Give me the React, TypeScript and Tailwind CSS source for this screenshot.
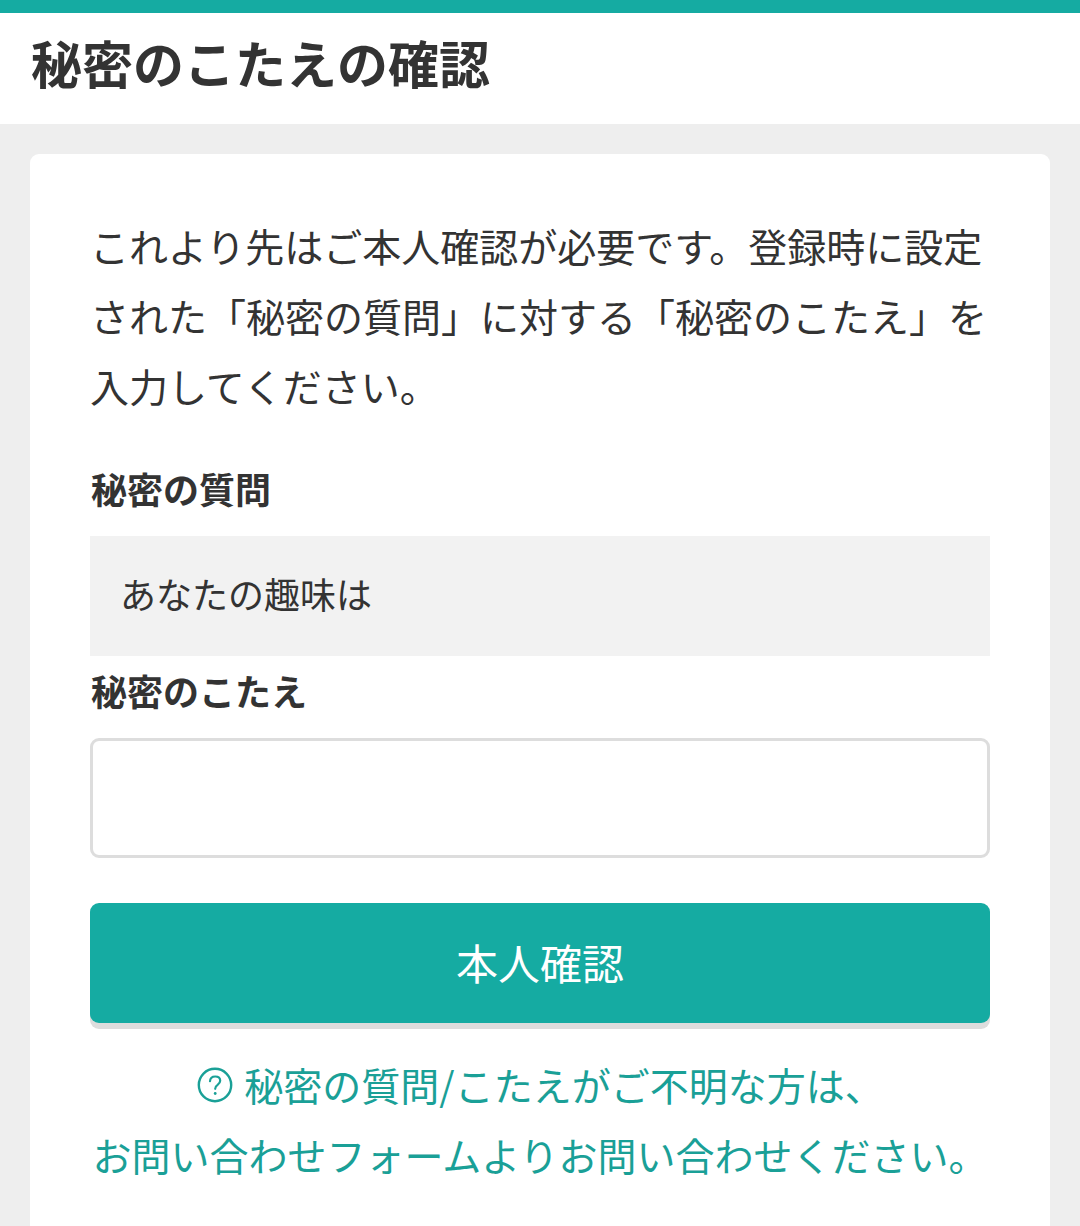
export default function App() {
  return (
    <div className="h-[1226px] overflow-hidden bg-[#eeeeee] text-[#333333] font-['Noto_Sans_CJK_JP',sans-serif]">
      <header className="h-[124px] border-t-[13px] border-[#15aba2] bg-white pl-[31px] pr-[30px] flex items-center">
        <h1 className="text-[51px] font-bold leading-none -mt-[12px]">秘密のこたえの確認</h1>
      </header>
      <main className="pt-[30px] px-[30px]">
        <div className="bg-white rounded-t-[9px] px-[60px] pt-[56px] pb-[60px]">
          <p className="text-[39px] leading-[70px]">
            これより先はご本人確認が必要です。登録時に設定された「秘密の質問」に対する「秘密のこたえ」を入力してください。
          </p>
          <div className="mt-[42px] text-[36px] font-bold leading-[52px] pl-px">秘密の質問</div>
          <div className="mt-[22px] h-[120px] bg-[#f2f2f2] pl-[30px] pr-[32px] pb-[7px] flex items-center text-[36px]">あなたの趣味は</div>
          <div className="mt-[8px] text-[36px] font-bold leading-[52px] pl-px">秘密のこたえ</div>
          <input className="block mt-[22px] w-full h-[120px] bg-white border-[3px] border-[#dddddd] rounded-[9px] outline-none" />
          <button className="block mt-[45px] w-full h-[120px] pb-[3px] bg-[#15aba2] rounded-[9px] shadow-[0_6px_0_#dddddd] text-white text-[42px]">本人確認</button>
          <div className="mt-[26px] text-center text-[39px] leading-[70px] text-[#1aa097]">
            <div className="flex items-center justify-center">
              <svg className="w-[36px] h-[36px] ml-[1px] mr-[11px] mt-[1px]" viewBox="0 0 36 36" fill="none" stroke="#1aa097">
                <circle cx="18" cy="18" r="16.2" strokeWidth="2.4" />
                <path d="M13 14.2c.2-3 2.3-4.7 5.2-4.7 3 0 5 1.7 5 4.3 0 1.9-1 2.9-2.6 4-1.7 1.1-2.4 2-2.4 4" strokeWidth="2.2" strokeLinecap="round" />
                <circle cx="18.2" cy="26.5" r="1.4" fill="#1aa097" stroke="none" />
              </svg>
              <span>秘密の質問/こたえがご不明な方は、</span>
            </div>
            <div>お問い合わせフォームよりお問い合わせください。</div>
          </div>
        </div>
      </main>
    </div>
  );
}
